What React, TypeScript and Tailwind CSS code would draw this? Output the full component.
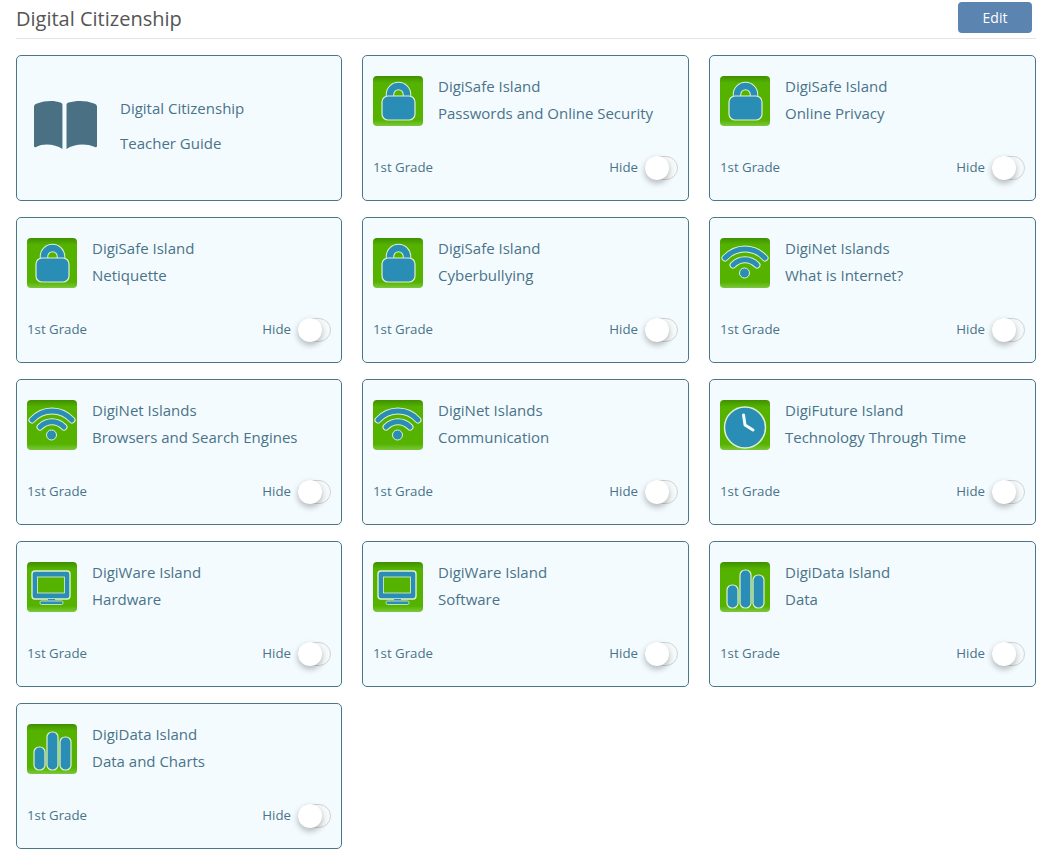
const courses = [
  { title: "DigiSafe Island", name: "Passwords and Online Security", icon: "lock" },
  { title: "DigiSafe Island", name: "Online Privacy", icon: "lock" },
  { title: "DigiSafe Island", name: "Netiquette", icon: "lock" },
  { title: "DigiSafe Island", name: "Cyberbullying", icon: "lock" },
  { title: "DigiNet Islands", name: "What is Internet?", icon: "wifi" },
  { title: "DigiNet Islands", name: "Browsers and Search Engines", icon: "wifi" },
  { title: "DigiNet Islands", name: "Communication", icon: "wifi" },
  { title: "DigiFuture Island", name: "Technology Through Time", icon: "clock" },
  { title: "DigiWare Island", name: "Hardware", icon: "monitor" },
  { title: "DigiWare Island", name: "Software", icon: "monitor" },
  { title: "DigiData Island", name: "Data", icon: "bars" },
  { title: "DigiData Island", name: "Data and Charts", icon: "bars" },
];

const BLUE = "#2a8db5";
const HALO = "#dff0d0";
const GREEN = "#55b300";

function CourseIcon({ kind }: { kind: string }) {
  return (
    <div className="h-[50px] w-[50px] shrink-0 overflow-hidden rounded-[4px] bg-[linear-gradient(180deg,#3f8f00_0%,#55b300_14%,#55b300_88%,#7cc83c_100%)]">
      <svg width="50" height="50" viewBox="0 0 50 50" fill="none">
        {kind === "lock" && (
          <>
            <path d="M17 24v-5.500a8.500 8.500 0 0 1 17 0V24" stroke={HALO} strokeWidth="8.5" />
            <path d="M17 24v-5.500a8.500 8.500 0 0 1 17 0V24" stroke={BLUE} strokeWidth="6.5" />
            <rect x="9" y="20" width="33" height="24" rx="6" fill={BLUE} stroke={HALO} strokeWidth="1.2" />
          </>
        )}
        {kind === "wifi" && (
          <>
            <path d="M5 20C16 8 34 8 45 20" stroke={HALO} strokeWidth="7" strokeLinecap="round" />
            <path d="M5 20C16 8 34 8 45 20" stroke={BLUE} strokeWidth="5" strokeLinecap="round" />
            <path d="M13 27C20 20 30 20 37 27" stroke={HALO} strokeWidth="7" strokeLinecap="round" />
            <path d="M13 27C20 20 30 20 37 27" stroke={BLUE} strokeWidth="5" strokeLinecap="round" />
            <circle cx="24.5" cy="35" r="5" fill={BLUE} stroke={HALO} strokeWidth="1" />
          </>
        )}
        {kind === "clock" && (
          <>
            <circle cx="25" cy="27.5" r="20.5" fill={BLUE} stroke={HALO} strokeWidth="1.5" />
            <path d="M23.5 15l1.500 10 8 5" stroke="#f4fbff" strokeWidth="3" strokeLinecap="round" strokeLinejoin="round" />
          </>
        )}
        {kind === "monitor" && (
          <>
            <rect x="5" y="9" width="38" height="28" rx="3" fill={BLUE} stroke={HALO} strokeWidth="1.4" />
            <rect x="10.500" y="15" width="27" height="16" fill={GREEN} stroke={HALO} strokeWidth="0.8" />
            <path d="M21 37h7v3h-7z" fill={BLUE} />
            <rect x="13" y="39" width="23" height="3.5" rx="1.5" fill={BLUE} stroke={HALO} strokeWidth="0.8" />
          </>
        )}
        {kind === "bars" && (
          <>
            <rect x="7" y="23" width="11" height="23" rx="5" fill={BLUE} stroke={HALO} strokeWidth="1.2" />
            <rect x="20" y="8" width="11" height="38" rx="5" fill={BLUE} stroke={HALO} strokeWidth="1.2" />
            <rect x="33" y="13" width="11" height="33" rx="5" fill={BLUE} stroke={HALO} strokeWidth="1.2" />
          </>
        )}
      </svg>
    </div>
  );
}

function BookIcon() {
  return (
    <svg width="63" height="50" viewBox="1 0 62 50" preserveAspectRatio="none" fill="#4a7083" className="-mt-[2px] shrink-0">
      <path d="M1 7C1 5 2 4 4 3.500C12 0 22 .5 27 2.500C28.500 3 29 4 29 5V49C22 44 10 43 3 47C1.500 47.500 1 47 1 46Z" />
      <path d="M63 7C63 5 62 4 60 3.500C52 0 42 .5 35 2.500C33.500 3 33 4 33 5V49C40 44 52 43 61 47C62.500 47.500 63 47 63 46Z" />
    </svg>
  );
}

function Toggle() {
  return (
    <div className="h-6 w-[33px] rounded-full border border-[#cfd4d6] bg-[#f6fafb]">
      <div className="-ml-px -mt-px h-6 w-6 rounded-full bg-white shadow-[0_3px_6px_rgba(0,0,0,0.28)]" />
    </div>
  );
}

export default function App() {
  return (
    <div className="h-[853px] overflow-hidden bg-white pl-4 pr-[10px] pt-[2px] font-['Open_Sans',sans-serif] text-[#4a7388]">
      <div className="flex h-[37px] items-start justify-between border-b border-[#e5e5e5]">
        <h1 className="mt-[3px] text-[20px] leading-[28px] text-[#555555]">Digital Citizenship</h1>
        <button className="mr-1 h-[31px] w-[74px] rounded-[4px] bg-[#5b84b1] text-[14px] text-white">Edit</button>
      </div>

      <div className="mt-4 grid grid-cols-[326px_327px_327px] gap-x-5 gap-y-4">
        <div className="flex h-[146px] items-center rounded-[5px] border border-[#4a7788] bg-[#f3fbff] pb-1 pl-[17px]">
          <BookIcon />
          <div className="ml-[23px] flex flex-col gap-[14px] text-[15px] leading-[21px]">
            <span>Digital Citizenship</span>
            <span>Teacher Guide</span>
          </div>
        </div>
        {courses.map((c) => (
          <div key={c.name} className="flex h-[146px] flex-col rounded-[5px] border border-[#4a7788] bg-[#f3fbff] px-[10px] pt-5">
            <div className="flex">
              <CourseIcon kind={c.icon} />
              <div className="ml-[15px] flex flex-col gap-[6px] text-[15px] leading-[21px]">
                <span>{c.title}</span>
                <span>{c.name}</span>
              </div>
            </div>
            <div className="mt-[30px] flex items-center justify-between text-[13.25px]">
              <span className="mb-px">1st Grade</span>
              <div className="flex items-center gap-[7px]">
                <span className="mb-px">Hide</span>
                <Toggle />
              </div>
            </div>
          </div>
        ))}
      </div>
    </div>
  );
}
